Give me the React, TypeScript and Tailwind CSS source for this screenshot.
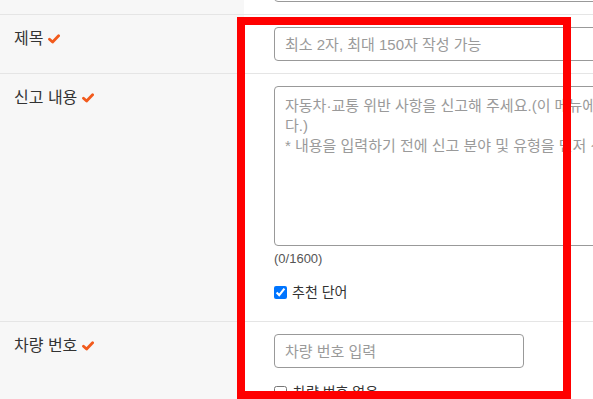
const FONT = "font-[family-name:'Liberation_Sans','Noto_Sans_CJK_KR',sans-serif]";

function Required() {
  return (
    <svg viewBox="0 0 12 10" className="ml-[5px] h-[10px] w-[12px] shrink-0" aria-hidden>
      <path d="M1.5 5.2 4.6 8 10.6 1.8" fill="none" stroke="#f25a1c" strokeWidth="2.8" strokeLinecap="round" strokeLinejoin="round" />
    </svg>
  );
}

function Label({ text, required = true }: { text: string; required?: boolean }) {
  return (
    <div className="w-[244px] shrink-0 bg-[#f7f7f7] pl-[14px] pt-[12px]">
      {text ? (
        <span className="flex items-center text-[16px] leading-6 text-[#333]">
          {text}
          {required ? <Required /> : null}
        </span>
      ) : null}
    </div>
  );
}

const inputCls =
  "block h-[34px] rounded-[4px] border border-[#999] bg-white px-[10px] text-[15px] text-[#333] placeholder:text-[#9a9a9a] outline-none";

export default function App() {
  return (
    <div className={`relative h-[399px] w-[593px] overflow-hidden bg-white ${FONT}`}>
      <div className="-mt-[44px]">
        {/* previous row, mostly scrolled off */}
        <div className="flex border-b border-[#e5e5e5]">
          <Label text="" required={false} />
          <div className="flex-1 py-3 pl-[30px]">
            <input className={`${inputCls} w-[600px] shrink-0`} />
          </div>
        </div>

        {/* 제목 */}
        <div className="flex border-b border-[#e5e5e5]">
          <Label text="제목" />
          <div className="flex-1 py-3 pl-[30px]">
            <input className={`${inputCls} w-[600px]`} placeholder="최소 2자, 최대 150자 작성 가능" />
          </div>
        </div>

        {/* 신고 내용 */}
        <div className="flex border-b border-[#e5e5e5]">
          <Label text="신고 내용" />
          <div className="flex-1 pb-[19px] pl-[30px] pt-3">
            <div className="h-[160px] w-[700px] rounded-[4px] border border-[#999] bg-white px-[10px] pt-[9px] text-[15px] leading-5 whitespace-pre text-[#9a9a9a]">
              {"자동차·교통 위반 사항을 신고해 주세요.(이 메뉴에서는 자동차·교통 위반 사항만 신고할 수 있습니\n다.)\n* 내용을 입력하기 전에 신고 분야 및 유형을 먼저 선택해 주세요."}
            </div>
            <p className="mt-[3px] text-[13px] leading-5 text-[#555]">(0/1600)</p>
            <label className="mt-[13px] flex items-center gap-[5px] text-[14px] leading-5 text-[#333]">
              <input type="checkbox" defaultChecked className="h-[13px] w-[13px]" />
              추천 단어
            </label>
          </div>
        </div>

        {/* 차량 번호 */}
        <div className="flex border-b border-[#e5e5e5]">
          <Label text="차량 번호" />
          <div className="flex-1 py-3 pl-[30px]">
            <input className={`${inputCls} w-[250px]`} placeholder="차량 번호 입력" />
            <label className="mt-[14px] flex items-center gap-[6px] text-[14px] leading-5 text-[#333]">
              <input type="checkbox" className="h-[13px] w-[13px]" />
              차량 번호 없음
            </label>
          </div>
        </div>
      </div>

      {/* highlight frame */}
      <div className="pointer-events-none absolute left-[237px] top-[17px] h-[382px] w-[334px] border-8 border-[#ff0000]" />
    </div>
  );
}
